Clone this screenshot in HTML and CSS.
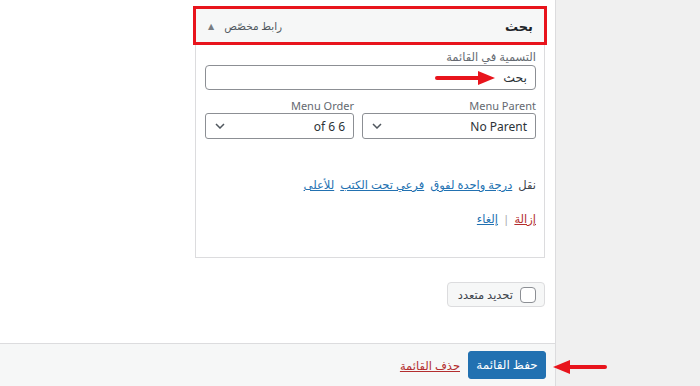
FILE: index.html
```
<!DOCTYPE html>
<html lang="ar" dir="rtl">
<head>
  <meta charset="utf-8">
  <title>القوائم</title>
  <link rel="stylesheet" href="styles.css">
</head>
<body>
  <div class="page">
    <div class="panel">
      <div class="panel-body">
        <div class="menu-item">
          <div class="item-head">
            <span class="item-title">بحث</span>
            <span class="item-controls">
              <span class="item-type">رابط مخصّص</span>
              <span class="item-toggle">▲</span>
            </span>
          </div>
          <div class="item-settings">
            <div class="field-label">التسمية في القائمة</div>
            <div class="text-input">بحث</div>

            <div class="field-row">
              <div class="field field-parent">
                <div class="field-label">Menu Parent</div>
                <div class="select">
                  <span>No Parent</span>
                  <svg class="chevron" width="10" height="6" viewBox="0 0 10 6"><path d="M1 1l4 4 4-4" fill="none" stroke="#50575e" stroke-width="1.5"/></svg>
                </div>
              </div>
              <div class="field field-order">
                <div class="field-label">Menu Order</div>
                <div class="select">
                  <span>6 of 6</span>
                  <svg class="chevron" width="10" height="6" viewBox="0 0 10 6"><path d="M1 1l4 4 4-4" fill="none" stroke="#50575e" stroke-width="1.5"/></svg>
                </div>
              </div>
            </div>

            <div class="move-row">
              <span>نقل</span>
              <a href="#">درجة واحدة لفوق</a>
              <a href="#">فرعي تحت الكتب</a>
              <a href="#">للأعلى</a>
            </div>

            <div class="actions-row">
              <a href="#" class="delete">إزالة</a>
              <span class="sep">|</span>
              <a href="#">إلغاء</a>
            </div>
          </div>
        </div>

        <label class="bulk-select">
          <span class="checkbox"></span>
          <span>تحديد متعدد</span>
        </label>
      </div>

      <div class="panel-footer">
        <div class="btn-save">حفظ القائمة</div>
        <a href="#" class="delete">حذف القائمة</a>
      </div>
    </div>

    <!-- annotation arrows -->
    <svg class="arrow arrow-input" width="62" height="16" viewBox="0 0 62 16">
      <path d="M2 8H46" stroke="#e8141c" stroke-width="4" stroke-linecap="round"/>
      <path d="M43 1L60 8L43 15Z" fill="#e8141c"/>
    </svg>
    <svg class="arrow arrow-save" width="56" height="16" viewBox="0 0 56 16">
      <path d="M12 8H52" stroke="#e8141c" stroke-width="4" stroke-linecap="round"/>
      <path d="M17 1L0 8L17 15Z" fill="#e8141c"/>
    </svg>
  </div>
</body>
</html>
```

FILE: styles.css
```
body {
  margin: 0;
  background: #f0f0f0;
  font-family: "Noto Sans", "DejaVu Sans", sans-serif;
  font-size: 11.5px;
  color: #3c434a;
}

a {
  color: #2271b1;
}

.page {
  position: relative;
  width: 700px;
  height: 386px;
  overflow: hidden;
}

.panel {
  width: 555px;
  height: 386px;
  margin-right: auto;
  margin-left: 0;
  background: #fff;
  border-right: 1px solid #dcdcde;
  display: flex;
  flex-direction: column;
}

.panel-body {
  flex: 1;
  padding: 6px 10px 0 0;
}

.menu-item {
  width: 350px;
}

.item-head {
  margin: 0 -2px;
  height: 33px;
  border: 3px solid #e8141c;
  background: #f6f7f7;
  display: flex;
  align-items: center;
  justify-content: space-between;
  padding: 0 11px 0 12px;
}

.item-title {
  font-weight: bold;
  font-size: 13px;
  color: #1d2327;
}

.item-controls {
  display: flex;
  align-items: center;
  gap: 10px;
}

.item-type {
  font-size: 10.5px;
  color: #50575e;
}

.item-toggle {
  font-size: 8px;
  color: #787c82;
}

.item-settings {
  border: 1px solid #dcdcde;
  border-top: 0;
  padding: 4px 8px 29px 9px;
}

.field-label {
  line-height: 15px;
  font-size: 11px;
  color: #646970;
}

.item-settings > .field-label {
  line-height: 16px;
  font-size: 11.5px;
}

.text-input {
  height: 23px;
  line-height: 23px;
  border: 1px solid #8c8f94;
  border-radius: 4px;
  padding: 0 8px;
  font-size: 12.5px;
  color: #2c3338;
}

.field-row {
  display: flex;
  gap: 8px;
  margin-top: 8px;
}

.field-parent {
  width: 174px;
}

.field-order {
  flex: 1;
}

.select {
  height: 24px;
  border: 1px solid #8c8f94;
  border-radius: 3px;
  display: flex;
  align-items: center;
  justify-content: space-between;
  padding: 0 8px 0 9px;
  font-size: 12px;
  color: #2c3338;
}

.move-row {
  margin-top: 37px;
  line-height: 18px;
  display: flex;
  gap: 6px;
}

.actions-row {
  margin-top: 16px;
  line-height: 18px;
  display: flex;
  gap: 5px;
}

.sep {
  color: #a7aaad;
}

.delete {
  color: #b32d2e;
}

.bulk-select {
  margin-top: 24px;
  width: fit-content;
  height: 23px;
  padding: 0 8px 0 10px;
  border: 1px solid #dcdcde;
  border-radius: 4px;
  background: #f6f7f7;
  display: flex;
  align-items: center;
  gap: 7px;
  white-space: nowrap;
  color: #3c434a;
}

.checkbox {
  width: 14px;
  height: 14px;
  border: 1px solid #8c8f94;
  border-radius: 4px;
  background: #fff;
}

.panel-footer {
  height: 42px;
  border-top: 1px solid #dcdcde;
  background: #f6f7f7;
  display: flex;
  align-items: center;
  gap: 8px;
  padding-right: 9px;
}

.btn-save {
  width: 76px;
  height: 26px;
  line-height: 26px;
  border: 1px solid #2271b1;
  border-radius: 3px;
  background: #2271b1;
  color: #fff;
  text-align: center;
  font-size: 12px;
}

.arrow {
  position: absolute;
}

.arrow-input {
  left: 435px;
  top: 70px;
}

.arrow-save {
  left: 553px;
  top: 359px;
}
```
